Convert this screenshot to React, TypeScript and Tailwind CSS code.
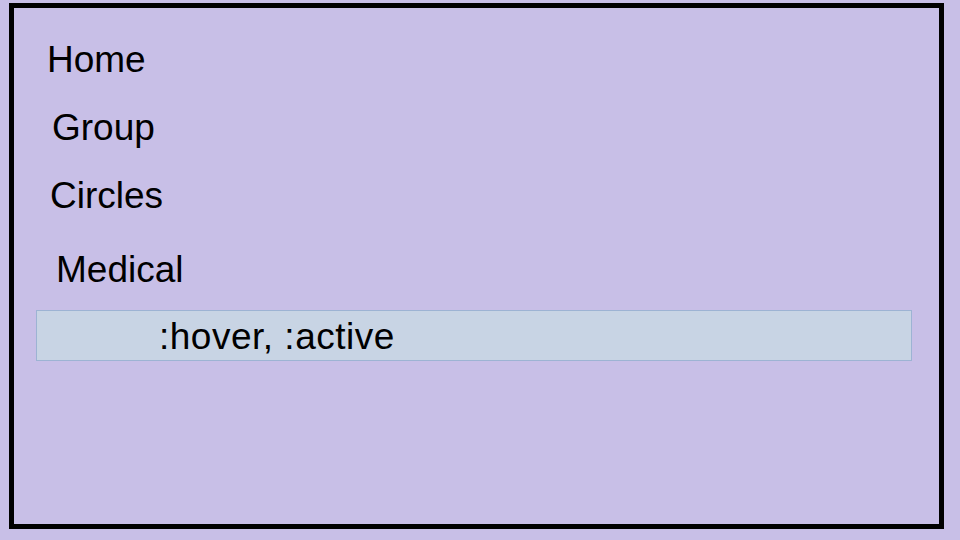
import React from 'react';

const items = [
  { label: 'Home', cls: 'mt-[32px] ml-[33px]' },
  { label: 'Group', cls: 'mt-[28px] ml-[38px]' },
  { label: 'Circles', cls: 'mt-[28px] ml-[36px]' },
  { label: 'Medical', cls: 'mt-[34px] ml-[42px]' },
];

export default function App() {
  return (
    <div className="w-[960px] h-[540px] bg-[#c8bfe7] pt-[3px] pl-[9px] overflow-hidden">
      <div
        className="w-[935px] h-[526px] border-[5px] border-black flex flex-col text-black text-[37px] leading-[40px]"
        style={{ fontFamily: '"Liberation Sans", Arial, sans-serif' }}
      >
        {items.map((item) => (
          <div key={item.label} className={item.cls}>
            {item.label}
          </div>
        ))}

        {/* hovered / active state of a menu row */}
        <div className="mt-[20px] ml-[22px] w-[876px] h-[51px] border border-[#9db3d3] bg-[#c8d4e4] pt-[6px] pl-[122px] tracking-[0.5px]">
          :hover, :active
        </div>
      </div>
    </div>
  );
}
